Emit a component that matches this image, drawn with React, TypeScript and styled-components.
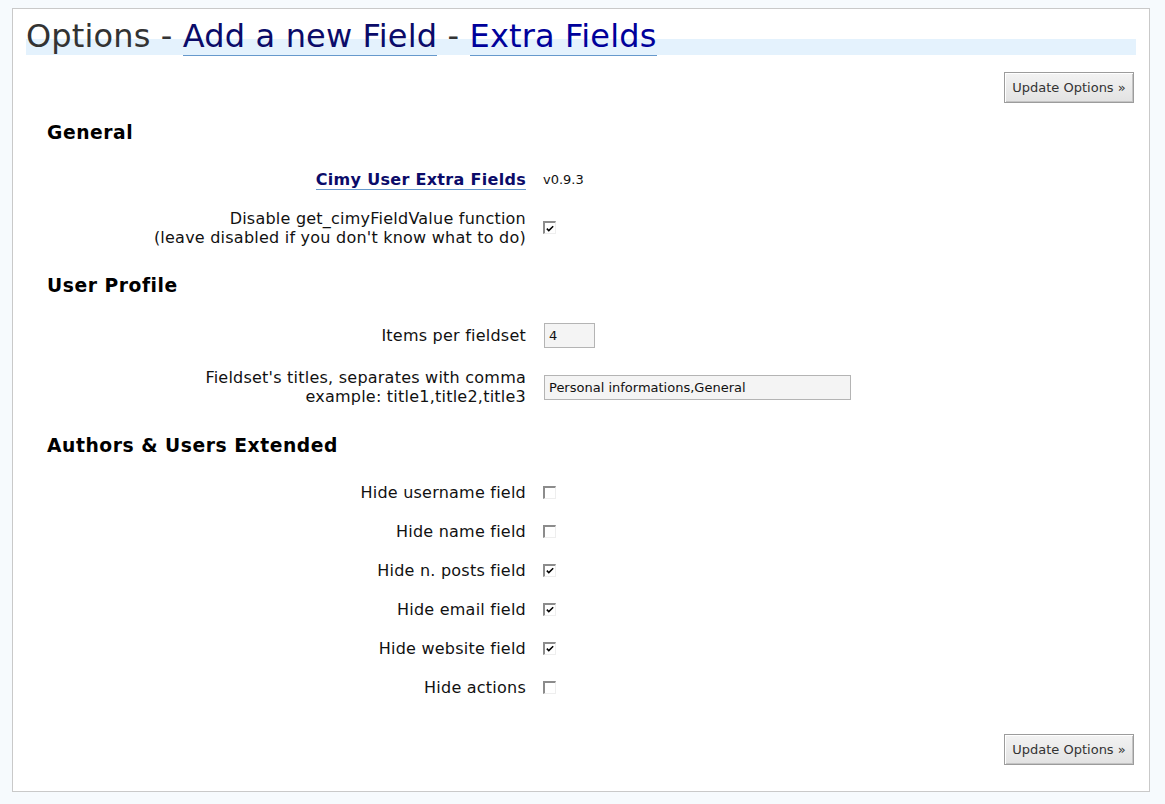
import React from "react";
import styled, { createGlobalStyle } from "styled-components";

const GlobalStyle = createGlobalStyle`
  html, body {
    margin: 0;
    padding: 0;
    background: #f6fafd;
    font-family: "DejaVu Sans", "Liberation Sans", sans-serif;
  }
  #root {
    padding: 8px 15px 12px 12px;
  }
`;

const Panel = styled.div`
  background: #fff;
  border: 1px solid #c9c9c9;
  padding: 0 13px 26px;
`;

const Title = styled.h2`
  margin: 25px 0 0;
  padding: 0;
  font: 400 32px/5px "DejaVu Sans", sans-serif;
  letter-spacing: 0.15px;
  color: #333;
  border-bottom: 16px solid #e4f2fd;
  white-space: nowrap;
`;

const Link = styled.a<{ $visited?: boolean }>`
  color: ${(p) => (p.$visited ? "#0b0b69" : "#00019b")};
  text-decoration: none;
  border-bottom: 1px solid #6699cc;
  cursor: pointer;
`;

const ButtonRow = styled.div<{ $top: number }>`
  display: flex;
  justify-content: flex-end;
  margin-top: ${(p) => p.$top}px;
  padding-right: 2px;
`;

const Button = styled.button`
  height: 31px;
  width: 130px;
  padding: 0;
  font: 400 13px "DejaVu Sans", sans-serif;
  color: #333;
  background: linear-gradient(#f3f3f3, #e2e2e2);
  border: 1px solid #9c9c9c;
  box-shadow: inset 1px 1px 0 #ffffff, inset -1px -1px 0 #c4c4c4;
  border-radius: 0;
  cursor: pointer;
`;

const Section = styled.section`
  padding-left: 21px;
`;

const Heading = styled.h3`
  margin: 18.5px 0 16px;
  font: 700 18.72px/22px "DejaVu Sans", sans-serif;
  letter-spacing: 0.55px;
  color: #000;
`;

const FieldRow = styled.div`
  display: grid;
  grid-template-columns: 479px 1fr;
  column-gap: 17px;
  align-items: center;
  padding: 10px 0;
`;

const Label = styled.div`
  text-align: right;
  font: 400 16px/19px "DejaVu Sans", sans-serif;
  letter-spacing: 0.23px;
  color: #111;
`;

const Value = styled.div`
  display: flex;
  align-items: center;
  font: 400 13px/19px "DejaVu Sans", sans-serif;
  color: #111;
`;

const StrongLink = styled(Link)`
  font-weight: 700;
  letter-spacing: 0.3px;
`;

const TextInput = styled.input<{ $w: number }>`
  box-sizing: border-box;
  width: ${(p) => p.$w}px;
  height: 25px;
  margin: 0 0 0 1px;
  padding: 0 4px;
  border: 1px solid #b4b4b4;
  background: #f4f4f4;
  font: 400 13px "DejaVu Sans", sans-serif;
  color: #111;
  outline: none;
`;

const Box = styled.span`
  box-sizing: border-box;
  display: inline-flex;
  align-items: center;
  justify-content: center;
  width: 13px;
  height: 13px;
  border-top: 2px solid #8c8c8c;
  border-left: 2px solid #8c8c8c;
  border-right: 1px solid #eeeeee;
  border-bottom: 1px solid #eeeeee;
  background: #fff;
`;

const Check = ({ checked }: { checked?: boolean }) => (
  <Box role="checkbox" aria-checked={!!checked}>
    {checked && (
      <svg width="8" height="7" viewBox="0 0 8 7">
        <polyline
          points="0.8,3.6 2.8,5.6 7.2,1.2"
          fill="none"
          stroke="#000"
          strokeWidth="1.5"
        />
      </svg>
    )}
  </Box>
);

const hideRows: [string, boolean][] = [
  ["Hide username field", false],
  ["Hide name field", false],
  ["Hide n. posts field", true],
  ["Hide email field", true],
  ["Hide website field", true],
  ["Hide actions", false],
];

export default function App() {
  return (
    <>
      <GlobalStyle />
      <Panel>
        <Title>
          Options - <Link $visited>Add a new Field</Link> -{" "}
          <Link>Extra Fields</Link>
        </Title>
        <ButtonRow $top={17}>
          <Button>Update Options »</Button>
        </ButtonRow>

        <Section>
          <Heading>General</Heading>
          <FieldRow>
            <Label>
              <StrongLink $visited>Cimy User Extra Fields</StrongLink>
            </Label>
            <Value>v0.9.3</Value>
          </FieldRow>
          <FieldRow>
            <Label>
              Disable get_cimyFieldValue function
              <br />
              (leave disabled if you don't know what to do)
            </Label>
            <Value>
              <Check checked />
            </Value>
          </FieldRow>
        </Section>

        <Section>
          <Heading>User Profile</Heading>
          <FieldRow>
            <Label>Items per fieldset</Label>
            <Value>
              <TextInput $w={51} defaultValue="4" />
            </Value>
          </FieldRow>
          <FieldRow>
            <Label>
              Fieldset's titles, separates with comma
              <br />
              example: title1,title2,title3
            </Label>
            <Value>
              <TextInput $w={307} defaultValue="Personal informations,General" />
            </Value>
          </FieldRow>
        </Section>

        <Section>
          <Heading>Authors &amp; Users Extended</Heading>
          {hideRows.map(([label, checked]) => (
            <FieldRow key={label}>
              <Label>{label}</Label>
              <Value>
                <Check checked={checked} />
              </Value>
            </FieldRow>
          ))}
        </Section>

        <ButtonRow $top={27.5}>
          <Button>Update Options »</Button>
        </ButtonRow>
      </Panel>
    </>
  );
}
